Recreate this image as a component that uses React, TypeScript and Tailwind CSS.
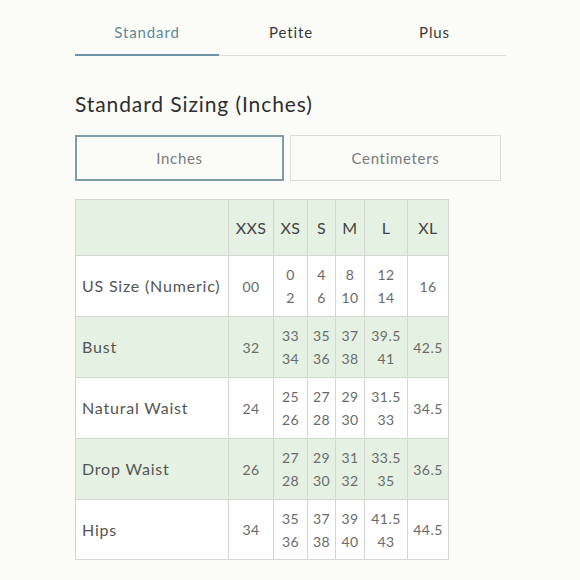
import React from "react";

const sizes = ["XXS", "XS", "S", "M", "L", "XL"];
const colW = ["w-[153px]", "w-[45px]", "w-[34px]", "w-[28px]", "w-[29px]", "w-[43px]", "w-[41px]"];

type Row = { label: string; cells: string[][]; green: boolean };

const rows: Row[] = [
  { label: "US Size (Numeric)", cells: [["00"], ["0", "2"], ["4", "6"], ["8", "10"], ["12", "14"], ["16"]], green: false },
  { label: "Bust", cells: [["32"], ["33", "34"], ["35", "36"], ["37", "38"], ["39.5", "41"], ["42.5"]], green: true },
  { label: "Natural Waist", cells: [["24"], ["25", "26"], ["27", "28"], ["29", "30"], ["31.5", "33"], ["34.5"]], green: false },
  { label: "Drop Waist", cells: [["26"], ["27", "28"], ["29", "30"], ["31", "32"], ["33.5", "35"], ["36.5"]], green: true },
  { label: "Hips", cells: [["34"], ["35", "36"], ["37", "38"], ["39", "40"], ["41.5", "43"], ["44.5"]], green: false },
];

export default function App() {
  return (
    <div
      className="w-[580px] h-[580px] bg-[#fbfbf8] pl-[75px] overflow-hidden"
      style={{ fontFamily: "Lato, 'Open Sans', sans-serif" }}
    >
      {/* Tabs */}
      <div className="w-[431px] flex border-b border-[#dcdfe0] pt-[22px]">
        <div className="w-[144px] text-center text-[15px] tracking-[0.9px] text-[#5d8a9b] pb-[12px] border-b-2 border-[#6f93a2] -mb-px leading-[20px]">
          Standard
        </div>
        <div className="w-[144px] text-center text-[15px] tracking-[0.9px] text-[#3a3a3a] pb-[13px] leading-[20px]">Petite</div>
        <div className="w-[143px] text-center text-[15px] tracking-[0.9px] text-[#3a3a3a] pb-[13px] leading-[20px]">Plus</div>
      </div>

      {/* Heading */}
      <h1 className="mt-[35px] text-[21px] tracking-[0.9px] leading-[26px] text-[#2e2e2e] font-normal">Standard Sizing (Inches)</h1>

      {/* Unit toggle */}
      <div className="mt-[18px] flex gap-[6px]">
        <div className="w-[209px] h-[46px] border-2 border-[#7e9ba7] flex items-center justify-center text-[15px] tracking-[0.7px] text-[#7a7a7a]">
          Inches
        </div>
        <div className="w-[211px] h-[46px] border border-[#dcdcdc] flex items-center justify-center text-[15px] tracking-[0.7px] text-[#7a7a7a]">
          Centimeters
        </div>
      </div>

      {/* Table */}
      <table className="mt-[18px] border-collapse table-fixed w-[373px]">
        <colgroup>
          {colW.map((w, i) => (
            <col key={i} className={w} />
          ))}
        </colgroup>
        <thead>
          <tr className="h-[56px] bg-[#e5f1e2]">
            <th className="border border-[#d3d6d3]"></th>
            {sizes.map((s) => (
              <th key={s} className="border border-[#d3d6d3] text-center text-[16px] tracking-[0.4px] font-normal text-[#444444]">
                {s}
              </th>
            ))}
          </tr>
        </thead>
        <tbody>
          {rows.map((r, ri) => (
            <tr key={r.label} className={`${ri === rows.length - 1 ? "h-[60px]" : "h-[61px]"} ${r.green ? "bg-[#e5f1e2]" : "bg-white"}`}>
              <td className="border border-[#d3d6d3] pl-[6px] text-[16px] tracking-[0.8px] text-[#555555] text-left whitespace-nowrap">{r.label}</td>
              {r.cells.map((c, ci) => (
                <td key={ci} className="border border-[#d3d6d3] text-center text-[14px] tracking-[0.5px] text-[#6a6a6a] leading-[23px] p-0">
                  {c.map((v, vi) => (
                    <div key={vi}>{v}</div>
                  ))}
                </td>
              ))}
            </tr>
          ))}
        </tbody>
      </table>
    </div>
  );
}
